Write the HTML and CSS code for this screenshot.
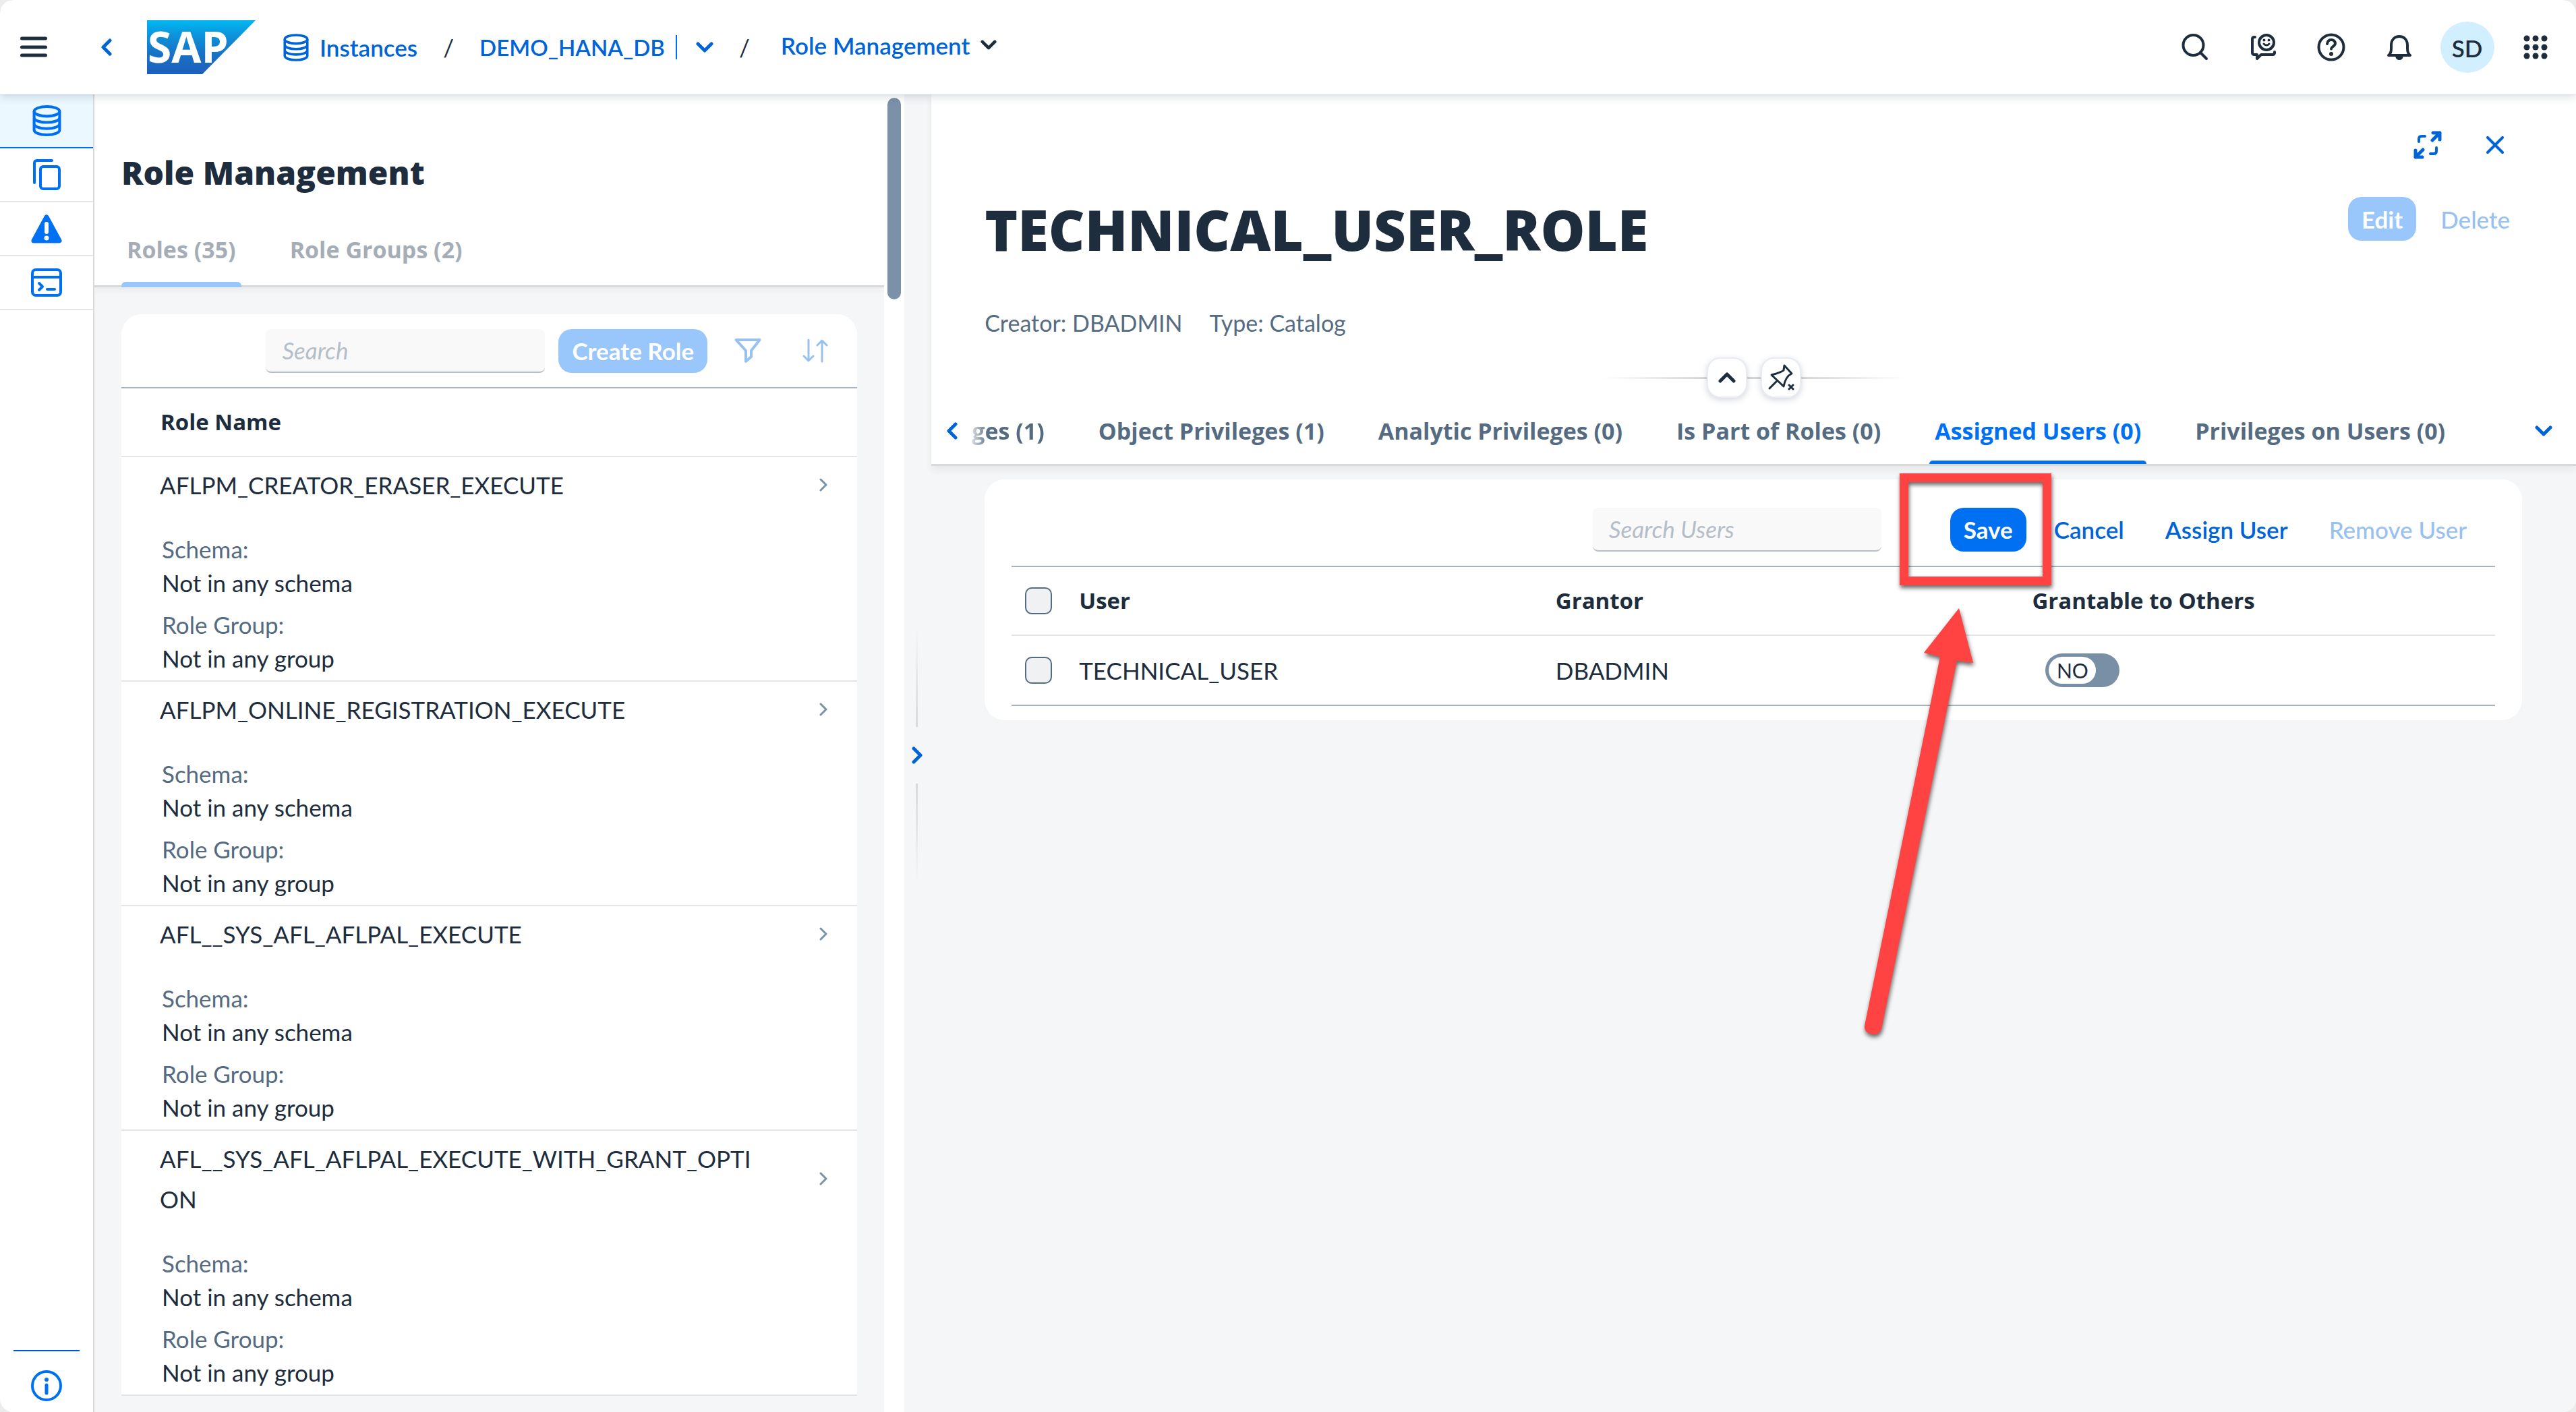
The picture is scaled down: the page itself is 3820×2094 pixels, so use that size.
FILE: index.html
```html
<!DOCTYPE html>
<html lang="en">
<head>
<meta charset="utf-8">
<title>Role Management</title>
<link rel="stylesheet" href="styles.css">
</head>
<body>
<svg class="sprite" aria-hidden="true">
  <symbol id="i-db" viewBox="0 0 42 45"><g fill="none" stroke="currentColor" stroke-width="4"><ellipse cx="21" cy="9" rx="18.500" ry="7"/><path d="M2.500 9v27c0 4 8 7 18.500 7s18.500-3 18.500-7V9M2.500 18c0 4 8 7 18.500 7s18.500-3 18.500-7M2.500 27c0 4 8 7 18.500 7s18.500-3 18.500-7"/></g></symbol>
  <symbol id="i-down" viewBox="0 0 26 16"><path d="M3 3l10 10L23 3" fill="none" stroke="currentColor" stroke-width="5" stroke-linecap="round" stroke-linejoin="round"/></symbol>
  <symbol id="i-left" viewBox="0 0 16 26"><path d="M13 3L3 13l10 10" fill="none" stroke="currentColor" stroke-width="5" stroke-linecap="round" stroke-linejoin="round"/></symbol>
  <symbol id="i-right" viewBox="0 0 16 26"><path d="M3 3l10 10L3 23" fill="none" stroke="currentColor" stroke-width="5" stroke-linecap="round" stroke-linejoin="round"/></symbol>
  <symbol id="i-nav" viewBox="0 0 12 20"><path d="M2 2l8 8-8 8" fill="none" stroke="currentColor" stroke-width="3" stroke-linecap="round" stroke-linejoin="round"/></symbol>
</svg>

<div class="app">
  <header class="shell">
    <button class="icon-btn menu" aria-label="Menu"><svg width="40" height="32" viewBox="0 0 40 32"><path d="M2.500 3h35M2.500 16h35M2.500 28h35" stroke="currentColor" stroke-width="5" stroke-linecap="round"/></svg></button>
    <button class="icon-btn back" aria-label="Back"><svg width="16" height="26"><use href="#i-left"/></svg></button>
    <svg class="logo" width="161" height="80" viewBox="0 0 161 80" role="img" aria-label="SAP">
      <defs><linearGradient id="sap" x1="0" y1="0" x2="0" y2="1"><stop offset="0" stop-color="#00b8f1"/><stop offset=".3" stop-color="#0d90d9"/><stop offset=".65" stop-color="#1870c5"/><stop offset="1" stop-color="#1e5fbb"/></linearGradient></defs>
      <path d="M0 0h161L82 80H0z" fill="url(#sap)"/>
      <text class="logo-text" x="1" y="63">SAP</text>
    </svg>
    <nav class="crumbs" aria-label="Breadcrumb">
      <a class="crumb" href="#"><svg width="38" height="41"><use href="#i-db"/></svg>Instances</a>
      <span class="sep">/</span>
      <a class="crumb db" href="#">DEMO_HANA_DB</a>
      <button class="icon-btn split" aria-label="Switch instance"><svg width="26" height="16"><use href="#i-down"/></svg></button>
      <span class="sep">/</span>
      <a class="crumb current" href="#">Role Management<svg class="dark" width="24" height="15"><use href="#i-down"/></svg></a>
    </nav>
    <div class="tools">
      <button class="icon-btn" aria-label="Search"><svg width="40" height="40" viewBox="0 0 40 40"><g fill="none" stroke="currentColor" stroke-width="4" stroke-linecap="round"><circle cx="17.500" cy="17" r="15"/><path d="M28 28l9 9"/></g></svg></button>
      <button class="icon-btn" aria-label="Feedback"><svg width="38" height="42" viewBox="0 0 38 42"><g fill="none" stroke="currentColor" stroke-width="4" stroke-linecap="round" stroke-linejoin="round"><path d="M7 6H6Q3 6 3 9v20q0 3 3 3h4v6l6-6h17q3 0 3-3v-1"/><circle cx="24" cy="14" r="11"/><path d="M20 16q4 4 8 0" stroke-width="3"/></g><circle cx="20.500" cy="10.500" r="2" fill="currentColor"/><circle cx="27.500" cy="10.500" r="2" fill="currentColor"/></svg></button>
      <button class="icon-btn" aria-label="Help"><svg width="42" height="42" viewBox="0 0 42 42"><g fill="none" stroke="currentColor" stroke-width="4" stroke-linecap="round"><circle cx="21" cy="21" r="18.500"/><path d="M15 16q1-6 6-6t6 5q0 3-4 5.500-2 1.500-2 3"/></g><circle cx="21" cy="31" r="3" fill="currentColor"/></svg></button>
      <button class="icon-btn" aria-label="Notifications"><svg width="40" height="40" viewBox="0 0 40 40"><path d="M4 32q4-3 4-10v-5C8 9 13 4 20 4s12 5 12 13v5q0 7 4 10z" fill="none" stroke="currentColor" stroke-width="4" stroke-linejoin="round"/><path d="M14 33h12q-1 6-6 6t-6-6z" fill="currentColor"/></svg></button>
      <button class="icon-btn" aria-label="Profile"><span class="avatar">SD</span></button>
      <button class="icon-btn" aria-label="Products"><svg width="36" height="36" viewBox="0 0 36 36" fill="currentColor"><circle cx="5" cy="5" r="4.500"/><circle cx="18" cy="5" r="4.500"/><circle cx="31" cy="5" r="4.500"/><circle cx="5" cy="18" r="4.500"/><circle cx="18" cy="18" r="4.500"/><circle cx="31" cy="18" r="4.500"/><circle cx="5" cy="31" r="4.500"/><circle cx="18" cy="31" r="4.500"/><circle cx="31" cy="31" r="4.500"/></svg></button>
    </div>
  </header>

  <main class="body">
    <nav class="side" aria-label="Tools">
      <a class="side-item active" href="#" aria-label="Instances"><svg width="43" height="46"><use href="#i-db"/></svg></a>
      <a class="side-item" href="#" aria-label="Copy"><svg width="42" height="46" viewBox="0 0 42 46"><g fill="none" stroke="currentColor" stroke-width="4" stroke-linecap="round"><path d="M3 35V6q0-4 4-4h22"/><rect x="12" y="11" width="28" height="33" rx="4"/></g></svg></a>
      <a class="side-item" href="#" aria-label="Alerts"><svg width="46" height="43" viewBox="0 0 46 43"><path d="M23 4L42 39H4z" fill="currentColor" stroke="currentColor" stroke-width="7" stroke-linejoin="round"/><path d="M23 14v12" stroke="#fff" stroke-width="6" stroke-linecap="round"/><circle cx="23" cy="35" r="3.500" fill="#fff"/></svg></a>
      <a class="side-item" href="#" aria-label="SQL console"><svg width="46" height="42" viewBox="0 0 46 42"><g fill="none" stroke="currentColor" stroke-width="4" stroke-linecap="round" stroke-linejoin="round"><rect x="2" y="2" width="42" height="38" rx="5"/><path d="M2 13h42M12 22l5 5-5 5M24 31h11"/></g></svg></a>
      <a class="side-info" href="#" aria-label="About"><svg width="46" height="46" viewBox="0 0 46 46"><circle cx="23" cy="23" r="21" fill="none" stroke="currentColor" stroke-width="4"/><circle cx="23" cy="14" r="3" fill="currentColor"/><path d="M23 22v12" stroke="currentColor" stroke-width="5" stroke-linecap="round"/></svg></a>
    </nav>

    <section class="list">
      <div class="list-main">
        <div class="list-head">
          <h1 class="list-title">Role Management</h1>
          <div class="tabs" role="tablist">
            <button class="tab on" role="tab" aria-selected="true" disabled>Roles (35)</button>
            <button class="tab" role="tab" disabled>Role Groups (2)</button>
          </div>
        </div>
        <div class="list-body">
          <div class="roles">
            <div class="toolbar">
              <input class="search" type="text" placeholder="Search" aria-label="Search roles">
              <button class="btn primary" disabled>Create Role</button>
              <button class="icon-btn tool" disabled aria-label="Filter"><svg width="40" height="38" viewBox="0 0 40 38"><path d="M2.500 3h35L25 19v9l-8 7V19z" fill="none" stroke="currentColor" stroke-width="4" stroke-linejoin="round"/></svg></button>
              <button class="icon-btn tool" disabled aria-label="Sort"><svg width="38" height="36" viewBox="0 0 38 36"><path d="M9 2v31M2 26l7 7 7-7M29 34V3M22 10l7-7 7 7" fill="none" stroke="currentColor" stroke-width="3" stroke-linecap="round" stroke-linejoin="round"/></svg></button>
            </div>
            <table class="role-table">
              <thead><tr><th scope="col">Role Name</th></tr></thead>
              <tbody>
                <tr><td><div class="role"><span class="name">AFLPM_CREATOR_ERASER_EXECUTE</span><svg class="go" width="12" height="20"><use href="#i-nav"/></svg></div>
                  <dl class="meta"><dt>Schema:</dt><dd>Not in any schema</dd><dt>Role Group:</dt><dd>Not in any group</dd></dl></td></tr>
                <tr><td><div class="role"><span class="name">AFLPM_ONLINE_REGISTRATION_EXECUTE</span><svg class="go" width="12" height="20"><use href="#i-nav"/></svg></div>
                  <dl class="meta"><dt>Schema:</dt><dd>Not in any schema</dd><dt>Role Group:</dt><dd>Not in any group</dd></dl></td></tr>
                <tr><td><div class="role"><span class="name">AFL__SYS_AFL_AFLPAL_EXECUTE</span><svg class="go" width="12" height="20"><use href="#i-nav"/></svg></div>
                  <dl class="meta"><dt>Schema:</dt><dd>Not in any schema</dd><dt>Role Group:</dt><dd>Not in any group</dd></dl></td></tr>
                <tr><td><div class="role"><span class="name">AFL__SYS_AFL_AFLPAL_EXECUTE_WITH_GRANT_OPTION</span><svg class="go" width="12" height="20"><use href="#i-nav"/></svg></div>
                  <dl class="meta"><dt>Schema:</dt><dd>Not in any schema</dd><dt>Role Group:</dt><dd>Not in any group</dd></dl></td></tr>
              </tbody>
            </table>
          </div>
        </div>
      </div>
      <div class="scrollbar"><div class="thumb"></div></div>
    </section>

    <div class="splitter">
      <span class="rule up"></span>
      <button class="icon-btn split-btn" aria-label="Resize columns"><svg width="16" height="26"><use href="#i-right"/></svg></button>
      <span class="rule"></span>
    </div>

    <section class="detail">
      <div class="detail-head">
        <div class="window-actions">
          <button class="icon-btn link" aria-label="Full screen"><svg width="42" height="42" viewBox="0 0 42 42"><g fill="none" stroke="currentColor" stroke-width="4" stroke-linecap="round" stroke-linejoin="round"><path d="M8 16v-4q0-4 4-4h5M25 34h5q4 0 4-4v-5"/><path d="M28 14L39 3M29 3h10v10M14 28L3 39M13 39H3V29" stroke-width="5"/></g></svg></button>
          <button class="icon-btn link" aria-label="Close"><svg width="26" height="26" viewBox="0 0 26 26"><path d="M2 2l22 22M24 2L2 24" stroke="currentColor" stroke-width="4" stroke-linecap="round"/></svg></button>
        </div>
        <div class="title-row">
          <h2 class="title">TECHNICAL_USER_ROLE</h2>
          <div class="title-actions">
            <button class="btn primary" disabled>Edit</button>
            <button class="btn" disabled>Delete</button>
          </div>
        </div>
        <div class="attrs"><span>Creator: DBADMIN</span><span>Type: Catalog</span></div>
        <div class="anchor">
          <button class="round" aria-label="Collapse header"><svg width="26" height="16" viewBox="0 0 26 16"><path d="M3 13L13 3l10 10" fill="none" stroke="currentColor" stroke-width="5" stroke-linecap="round" stroke-linejoin="round"/></svg></button>
          <button class="round" aria-label="Unpin header"><svg width="44" height="44" viewBox="0 0 44 44"><g fill="none" stroke="currentColor" stroke-width="4" stroke-linejoin="round" stroke-linecap="round"><path d="M27 4L38 16Q29 20 26 35L8 18Q23 14 26 11z" stroke-width="3"/><path d="M16 27L5 38" stroke-width="3"/><path d="M34 33l6 6M40 33l-6 6" stroke-width="3"/></g></svg></button>
        </div>
        <div class="tab-strip">
          <button class="icon-btn link prev" aria-label="Previous tabs"><svg width="16" height="26"><use href="#i-left"/></svg></button>
          <div class="tabs" role="tablist">
            <button class="tab cut" role="tab">ges (1)</button>
            <button class="tab" role="tab">Object Privileges (1)</button>
            <button class="tab" role="tab">Analytic Privileges (0)</button>
            <button class="tab" role="tab">Is Part of Roles (0)</button>
            <button class="tab on" role="tab" aria-selected="true">Assigned Users (0)</button>
            <button class="tab" role="tab">Privileges on Users (0)</button>
          </div>
          <button class="icon-btn link more" aria-label="All tabs"><svg width="26" height="16"><use href="#i-down"/></svg></button>
        </div>
      </div>

      <div class="detail-body">
        <div class="users">
          <div class="toolbar">
            <input class="search" type="text" placeholder="Search Users" aria-label="Search users">
            <button class="btn primary">Save</button>
            <button class="btn">Cancel</button>
            <button class="btn">Assign User</button>
            <button class="btn" disabled>Remove User</button>
          </div>
          <table class="user-table">
            <colgroup><col class="pick"><col><col><col></colgroup>
            <thead><tr><th><input class="check" type="checkbox" aria-label="Select all"></th><th scope="col">User</th><th scope="col">Grantor</th><th scope="col">Grantable to Others</th></tr></thead>
            <tbody><tr><td><input class="check" type="checkbox" aria-label="Select TECHNICAL_USER"></td><td>TECHNICAL_USER</td><td>DBADMIN</td><td><label class="switch"><input type="checkbox" role="switch"><span class="knob">NO</span></label></td></tr></tbody>
          </table>
          <svg class="callout" width="320" height="870" viewBox="0 0 320 870" aria-hidden="true">
            <g class="mark"><path d="M77 12h225v166H77zM90 25v140h199V25z" fill-rule="evenodd"/><path d="M165 212L186 293L162 290L50 836Q46 845 38 844Q24 842 25 831L137 284L113 278z"/></g>
          </svg>
        </div>
      </div>
    </section>
  </main>
</div>
</body>
</html>
```
FILE: styles.css
```css
:root {
  --ink: #1d2d3e;
  --label: #556b82;
  --blue: #0070f2;
  --link: #0064d9;
  --blue-off: #99c6fb;
  --link-off: #99c1f0;
  --bg: #f5f6f7;
  --line: #d9d9d9;
  --row: #e5e5e5;
  --strong: #a8b3bd;
  --text: Lato, "Open Sans", sans-serif;
  --bold: "Open Sans", "Noto Sans", sans-serif;
}
* { box-sizing: border-box; }
body { margin: 0; background: #ececec; color: var(--ink); font: 35px/50px var(--text); }
button, input { font: inherit; color: inherit; margin: 0; }
button { border: 0; background: none; padding: 0; cursor: pointer; }
a { color: var(--link); text-decoration: none; }
svg { display: block; flex: none; }
h1, h2, dl, dd { margin: 0; }
table { width: 100%; border-spacing: 0; table-layout: fixed; }
th { text-align: left; font: 700 33px/50px var(--bold); padding: 0; }
td { padding: 0; }
.sprite { position: absolute; width: 0; height: 0; }
.app { height: 100vh; display: flex; flex-direction: column; overflow: hidden; border-radius: 20px; background: #fff; }
.icon-btn { display: flex; align-items: center; justify-content: center; flex: none; }

/* shell bar */
.shell { display: flex; align-items: center; flex: none; height: 140px; padding: 0 10px 0 30px; background: #fff; position: relative; z-index: 2; box-shadow: 0 0 2px rgba(34, 53, 130, .2), 0 4px 12px rgba(34, 53, 72, .16); }
.back { color: var(--link); margin: 0 52px 0 80px; }
.logo { overflow: visible; }
.logo-text { font: 700 64px var(--bold); fill: #fff; }
.crumbs { display: flex; align-items: center; margin-left: 41px; }
.crumb { display: flex; align-items: center; gap: 16px; font-weight: 600; }
.crumb.db { font-size: 33px; border-right: 2px solid var(--blue); padding-right: 16px; line-height: 36px; }
.crumb.current { margin-left: 8px; padding-bottom: 7px; }
.dark { color: var(--ink); }
.sep { width: 92px; text-align: center; }
.split { color: var(--link); margin-left: 28px; }
.tools { display: flex; margin-left: auto; }
.tools .icon-btn { width: 101px; height: 80px; }
.avatar { width: 80px; height: 76px; border-radius: 50%; background: #d1efff; line-height: 78px; font-weight: 600; }

.body { flex: 1; min-height: 0; display: grid; grid-template-columns: 140px minmax(0, 33fr) 40px minmax(0, 67fr); background: var(--bg); }

/* tool rail */
.side { display: flex; flex-direction: column; background: #fff; border-right: 2px solid var(--line); }
.side-item { display: flex; align-items: center; justify-content: center; height: 80px; border-bottom: 2px solid var(--row); color: var(--blue); }
.side-item.active { background: #ebf8ff; border-color: var(--blue); }
.side-info { display: flex; justify-content: center; margin: auto 20px 0; padding: 28px 0 16px; border-top: 2px solid #0057d2; color: var(--blue); }

/* role list column */
.list { display: flex; min-height: 0; background: #fff; }
.list-main { flex: 1; min-width: 0; overflow: hidden; background: var(--bg); }
.list-head { background: #fff; padding: 83px 40px 0; border-bottom: 3px solid var(--line); box-shadow: 0 4px 8px rgba(34, 53, 72, .06); }
.list-title { font: 800 48px/66px var(--bold); margin-bottom: 27px; }
.scrollbar { width: 30px; padding: 5px; }
.thumb { height: 299px; border-radius: 10px; background: #7b91a8; }
.list-body { padding: 40px 40px 0; }
.roles { background: #fff; border-radius: 30px 30px 0 0; }

.tabs { display: flex; gap: 64px; }
.tab { position: relative; flex: none; padding: 0 8px; height: 107px; font: 700 34px/50px var(--bold); color: var(--label); white-space: nowrap; }
.tab:disabled { color: #a5adb6; }
.tab.on::after { content: ""; position: absolute; left: 0; right: 0; bottom: -3px; height: 8px; border-radius: 6px 6px 0 0; background: var(--blue-off); }

.toolbar { display: flex; align-items: center; gap: 20px; border-bottom: 2px solid var(--strong); }
.roles .toolbar { justify-content: flex-end; height: 110px; padding: 0 22px; }
.search { width: 414px; height: 65px; padding: 0 24px; border: 0; border-bottom: 2px solid #b3bfca; border-radius: 8px; background: #f9f9f9; }
.search::placeholder { color: #b5bec8; font-style: italic; opacity: 1; }
.btn { height: 65px; padding: 0 20px; border-radius: 20px; font-weight: 600; color: var(--link); white-space: nowrap; }
.btn:disabled { color: var(--link-off); font-weight: 500; }
.btn.primary { background: var(--blue); color: #fff; font-weight: 700; }
.btn.primary:disabled { background: var(--blue-off); color: #fff; font-weight: 700; }
.tool { width: 80px; height: 65px; color: var(--link-off); }

.role-table th { height: 102px; padding-left: 58px; border-bottom: 2px solid var(--row); }
.role-table td { padding: 11px 44px 8px 57px; border-bottom: 2px solid var(--row); }
.role { display: flex; align-items: center; justify-content: space-between; gap: 76px; line-height: 60px; }
.name { overflow-wrap: anywhere; }
.go { color: #7b91a8; }
.meta { margin: 40px 0 0 3px; }
.meta dt { color: var(--label); }
.meta dd + dt { margin-top: 12px; }

/* column splitter */
.splitter { display: flex; flex-direction: column; align-items: center; justify-content: center; padding: 6px 3px 0 0; }
.rule { width: 3px; height: 148px; background: linear-gradient(#d9d9d9, transparent); }
.rule.up { background: linear-gradient(transparent, #d9d9d9); }
.split-btn { height: 84px; color: var(--link); }

/* object page */
.detail { min-width: 0; }
.detail-head { background: #fff; border-bottom: 3px solid var(--line); box-shadow: 0 6px 10px rgba(34, 53, 72, .07); position: relative; }
.link { color: var(--link); }
.window-actions { display: flex; justify-content: flex-end; padding: 45px 70px 0 0; }
.window-actions .icon-btn { width: 100px; height: 60px; }
.title-row { display: flex; justify-content: space-between; margin-top: 47px; padding: 0 78px 0 79px; }
.title { font: 800 83px/96px var(--bold); }
.title-actions { display: flex; gap: 16px; }
.attrs { display: flex; gap: 40px; margin-top: 66px; padding: 0 79px; font-size: 34px; color: var(--label); }
.anchor { display: flex; justify-content: center; gap: 20px; width: 450px; height: 60px; margin: 26px auto 0; background: linear-gradient(90deg, transparent, #d5d5d5 35%, #d5d5d5 65%, transparent) center / 100% 3px no-repeat; }
.round { display: flex; align-items: center; justify-content: center; width: 60px; height: 60px; border: 2px solid #e9ebef; border-radius: 20px; background: #fff; box-shadow: 0 3px 10px rgba(34, 53, 100, .2); }
.tab-strip { display: flex; align-items: center; }
.tab-strip .tab { height: 98px; }
.tab-strip .tab.on { color: var(--blue); }
.tab-strip .tab.on::after { background: var(--blue); bottom: 0; height: 5px; }
.tab.cut { -webkit-mask: linear-gradient(90deg, transparent, #000 34px); mask: linear-gradient(90deg, transparent, #000 34px); }
.prev { width: 52px; padding-left: 10px; }
.more { width: 96px; margin-left: auto; }
.detail-body { padding: 20px 80px 20px 79px; }
.users { position: relative; padding: 0 40px 21px; border-radius: 30px; background: #fff; }
.users .toolbar { justify-content: flex-end; gap: 21px; height: 130px; padding: 20px 22px 0 0; }
.users .search { width: 428px; margin-right: 81px; }
.user-table th { height: 102px; border-bottom: 2px solid var(--row); }
.user-table td { height: 104px; border-bottom: 2px solid var(--strong); }
.user-table th, .user-table td { padding: 0 20px; }
.pick { width: 80px; }
.check { appearance: none; display: block; width: 40px; height: 40px; border: 2px solid var(--label); border-radius: 10px; background: #eff1f2; }
.switch { position: relative; display: block; width: 110px; height: 50px; margin-left: 20px; padding: 5px; border-radius: 25px; background: #788fa6; }
.switch input { appearance: none; position: absolute; inset: 0; }
.knob { display: block; width: 70px; height: 40px; border-radius: 20px; background: #fff; font-size: 30px; line-height: 40px; text-align: center; }
.callout { position: absolute; top: -21px; right: 680px; pointer-events: none; }
.mark { fill: #ff4343; filter: drop-shadow(1px 4px 3px rgba(0, 0, 0, .6)); }
```
